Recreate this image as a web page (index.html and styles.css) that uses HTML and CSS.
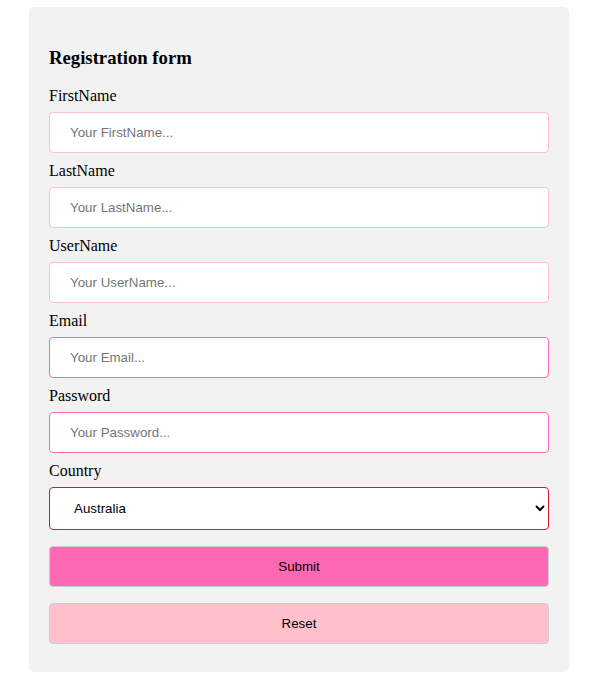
FILE: index.html
```html
<!DOCTYPE html>
<html>
<head>
<meta charset="utf-8">
<link rel="stylesheet" href="styles.css">
</head>
<body>
<form class="form">
  <h3 class="title">Registration form</h3>
  <label class="label">FirstName</label>
  <input class="field field-pink" type="text" placeholder="Your FirstName...">
  <label class="label">LastName</label>
  <input class="field field-pink" type="text" placeholder="Your LastName...">
  <label class="label">UserName</label>
  <input class="field field-pink" type="text" placeholder="Your UserName...">
  <label class="label">Email</label>
  <input class="field field-hot" type="text" placeholder="Your Email...">
  <label class="label">Password</label>
  <input class="field field-hot" type="password" placeholder="Your Password...">
  <label class="label">Country</label>
  <select class="field select">
    <option>Australia</option>
    <option>Canada</option>
    <option>USA</option>
  </select>
  <button class="btn btn-submit" type="button">Submit</button>
  <button class="btn btn-reset" type="button">Reset</button>
</form>
</body>
</html>
```
FILE: styles.css
```css
html, body {
  margin: 0;
  padding: 0;
  background: #ffffff;
}

body {
  font-family: "Liberation Serif", "Times New Roman", serif;
}

.form {
  display: flex;
  flex-direction: column;
  width: 540px;
  box-sizing: border-box;
  margin: 7px 0 0 29px;
  padding: 20px;
  background: #f2f2f2;
  border-radius: 5px;
}

.title {
  box-sizing: border-box;
  height: 21.5px;
  margin: 18.72px 0;
  padding-top: 1px;
  font-size: 18.72px;
  font-weight: bold;
  line-height: 21.5px;
  color: #000;
}

.label {
  display: block;
  box-sizing: border-box;
  height: 18px;
  padding-top: 1px;
  line-height: 18px;
  font-size: 16px;
  color: #000;
}

.field {
  display: block;
  width: 100%;
  box-sizing: border-box;
  height: 41px;
  margin: 8px 0;
  padding: 12px 20px;
  font-family: "Liberation Sans", Arial, sans-serif;
  font-size: 13.333px;
  border-radius: 4px;
  background: #fff;
  outline: none;
}

.field::placeholder {
  color: #757575;
}

.field-pink {
  border: 1px solid #ffc0cb;
}

.field-hot {
  border: 1px solid #ff69b4;
}

.select {
  height: 43px;
  border: 1px solid #dc143c;
  color: #000;
}

.btn {
  display: block;
  width: 100%;
  height: 41px;
  margin: 8px 0;
  box-sizing: border-box;
  border: 1px solid #cccccc;
  border-radius: 4px;
  font-family: "Liberation Sans", Arial, sans-serif;
  font-size: 13.333px;
  color: #000;
  cursor: pointer;
}

.btn-submit {
  background: #ff69b4;
}

.btn-reset {
  background: #ffc0cb;
}
```
